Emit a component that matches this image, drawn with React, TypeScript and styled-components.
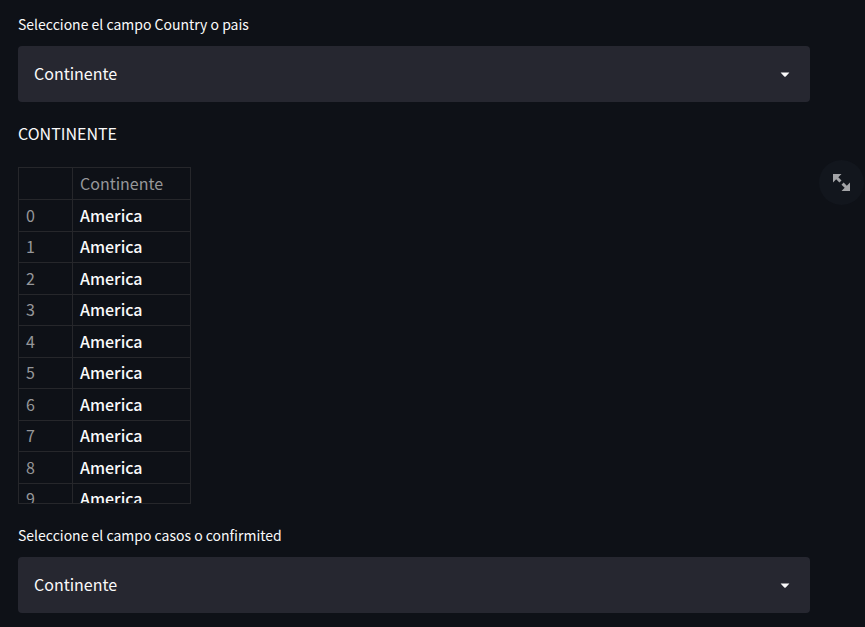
import React from "react";
import styled, { createGlobalStyle } from "styled-components";

const GlobalStyle = createGlobalStyle`
  * { box-sizing: border-box; }
  body {
    margin: 0;
    background: #0e1117;
    color: #fafafa;
    font-family: "Source Sans Pro", "Noto Sans CJK SC", sans-serif;
    font-size: 16px;
    line-height: 24px;
  }
`;

const Page = styled.main`
  display: flex;
  flex-direction: column;
  padding: 13px 55px 14px 18px;
`;

const Field = styled.div`
  display: flex;
  flex-direction: column;
  gap: 11px;
`;

const FieldLabel = styled.label`
  font-size: 14px;
  line-height: 22px;
`;

const SelectBox = styled.div`
  display: grid;
  align-items: center;
  background: #262730;
  border-radius: 4px;

  > * { grid-area: 1 / 1; }
`;

const Select = styled.select`
  appearance: none;
  width: 100%;
  height: 56px;
  padding: 0 44px 2px 16px;
  border: 0;
  border-radius: 4px;
  background: transparent;
  color: inherit;
  font: inherit;
  cursor: pointer;

  option { background: #262730; }
`;

const Caret = styled.svg`
  justify-self: end;
  margin-right: 20px;
  pointer-events: none;
`;

const Caption = styled.p`
  margin: 19px 0 22px;
`;

const FrameArea = styled.section`
  position: relative;
  margin-bottom: 20px;
`;

const TableClip = styled.div`
  width: 173px;
  height: 337px;
  overflow: hidden;
  border: 1px solid #26272b;
`;

const Table = styled.table`
  width: 100%;
  table-layout: fixed;
  border-collapse: separate;
  border-spacing: 0;

  tr > * {
    height: 32px;
    padding: 0 7px 2px;
    border-bottom: 1px solid #26272b;
    text-align: left;
    line-height: 24px;
  }
  tbody tr:nth-child(even) > * { height: 31px; }
`;

const HeadCell = styled.th<{ $index?: boolean }>`
  width: ${(p) => (p.$index ? "54px" : "auto")};
  border-right: ${(p) => (p.$index ? "1px solid #26272b" : "0")};
  color: #96979a;
  font-weight: 400;
`;

const IndexCell = styled.th`
  border-right: 1px solid #26272b;
  color: #96979a;
  font-weight: 400;
`;

const Cell = styled.td`
  font-weight: 500;
`;

const ExpandButton = styled.button`
  position: absolute;
  top: -7px;
  right: -54px;
  display: grid;
  place-items: center;
  width: 45px;
  height: 45px;
  padding: 0;
  border: 0;
  border-radius: 50%;
  background: #12161d;
  color: #a3a4a7;
  cursor: pointer;
`;

function SelectField({ id, label }: { id: string; label: string }) {
  return (
    <Field>
      <FieldLabel htmlFor={id}>{label}</FieldLabel>
      <SelectBox>
        <Select id={id} defaultValue="Continente">
          <option>Continente</option>
        </Select>
        <Caret width="10" height="6" viewBox="0 0 10 6" aria-hidden="true">
          <path d="M1 2.1C.6 1.7.8 1.4 1.3 1.4h7.4c.5 0 .7.3.3.7L5.7 5.5a1 1 0 0 1-1.4 0z" fill="#fafafa" />
        </Caret>
      </SelectBox>
    </Field>
  );
}

const rows = Array.from({ length: 10 }, () => "America");

export default function App() {
  return (
    <>
      <GlobalStyle />
      <Page>
        <SelectField id="country" label="Seleccione el campo Country o pais" />
        <Caption>CONTINENTE</Caption>
        <FrameArea>
          <TableClip>
            <Table>
              <thead>
                <tr>
                  <HeadCell $index aria-label="Index" />
                  <HeadCell scope="col">Continente</HeadCell>
                </tr>
              </thead>
              <tbody>
                {rows.map((value, i) => (
                  <tr key={i}>
                    <IndexCell scope="row">{i}</IndexCell>
                    <Cell>{value}</Cell>
                  </tr>
                ))}
              </tbody>
            </Table>
          </TableClip>
          <ExpandButton type="button" aria-label="View fullscreen">
            <svg width="17" height="17" viewBox="0 0 8 8" fill="currentColor" aria-hidden="true">
              <path d="M0 0v4l1.5-1.5L3 4l1-1-1.5-1.5L4 0H0zm5 4L4 5l1.5 1.5L4 8h4V4L6.5 5.5 5 4z" />
            </svg>
          </ExpandButton>
        </FrameArea>
        <SelectField id="cases" label="Seleccione el campo casos o confirmited" />
      </Page>
    </>
  );
}
